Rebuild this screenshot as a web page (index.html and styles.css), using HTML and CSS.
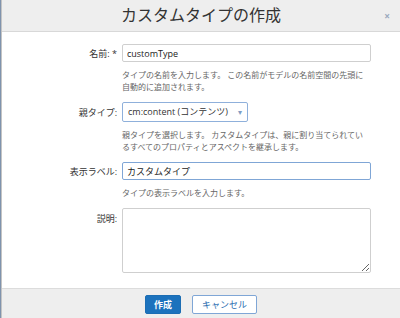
FILE: index.html
```html
<!DOCTYPE html>
<html lang="ja">
<head>
  <meta charset="UTF-8">
  <title>カスタムタイプの作成</title>
  <link rel="stylesheet" href="styles.css">
</head>
<body>
  <div class="dialog">
    <div class="dialog-header">
      <h1>カスタムタイプの作成</h1>
      <span class="close">×</span>
    </div>

    <div class="dialog-body">
      <div class="campo">
        <div class="fila">
          <label for="nombre">名前: *</label>
          <input type="text" id="nombre" class="entrada" value="customType">
        </div>
        <div class="ayuda">タイプの名前を入力します。 この名前がモデルの名前空間の先頭に<br>自動的に追加されます。</div>
      </div>

      <div class="campo">
        <div class="fila">
          <label>親タイプ:</label>
          <div class="selector">cm:content (コンテンツ)<span class="flecha">▾</span></div>
        </div>
        <div class="ayuda">親タイプを選択します。 カスタムタイプは、親に割り当てられてい<br>るすべてのプロパティとアスペクトを継承します。</div>
      </div>

      <div class="campo">
        <div class="fila">
          <label for="etiqueta">表示ラベル:</label>
          <input type="text" id="etiqueta" class="entrada activa" value="カスタムタイプ">
        </div>
        <div class="ayuda">タイプの表示ラベルを入力します。</div>
      </div>

      <div class="fila arriba">
        <label for="descripcion">説明:</label>
        <textarea id="descripcion"></textarea>
      </div>
    </div>

    <div class="dialog-footer">
      <button class="btn primario">作成</button>
      <button class="btn">キャンセル</button>
    </div>
  </div>
</body>
</html>
```

FILE: styles.css
```css
body {
  margin: 0;
  background-color: #7f93ad;
  font-family: "Open Sans", "Noto Sans CJK JP", sans-serif;
  color: #333;
}

.dialog {
  margin-left: 1px;
  border-left: 1px solid #c4c4c4;
  background-color: white;
  height: 318px;
  overflow: hidden;
}

.dialog-header {
  position: relative;
  height: 31px;
  background-color: #eeeeee;
  border-bottom: 1px solid #d8d8d8;
  text-align: center;
}

.dialog-header h1 {
  margin: 0;
  font-size: 16px;
  font-weight: normal;
  line-height: 31px;
  color: #333;
}

.close {
  position: absolute;
  right: 10px;
  top: 9px;
  font-size: 10px;
  font-weight: bold;
  color: #9aa9bd;
}

.dialog-body {
  padding: 12px 0 15px 0;
}

.campo {
  margin-bottom: 9px;
}

.fila {
  display: flex;
  align-items: center;
}

.fila.arriba {
  align-items: flex-start;
}

.fila.arriba label {
  margin-top: 4px;
}

label {
  width: 120px;
  padding-right: 5px;
  box-sizing: border-box;
  text-align: right;
  font-size: 9px;
  color: #333;
  flex-shrink: 0;
}

.entrada {
  width: 249px;
  height: 18px;
  box-sizing: border-box;
  padding: 0 4px;
  border: 1px solid #cfcfcf;
  border-radius: 2px;
  font-family: "Open Sans", "Noto Sans CJK JP", sans-serif;
  font-size: 9px;
  color: #222;
  outline: none;
}

.entrada.activa {
  border-color: #7fa6d6;
}

.selector {
  width: 126px;
  height: 20px;
  box-sizing: border-box;
  padding: 0 5px;
  border: 1px solid #8fb0db;
  border-radius: 2px;
  font-size: 9px;
  line-height: 18px;
  white-space: nowrap;
  display: flex;
  justify-content: space-between;
  flex-shrink: 0;
}

.flecha {
  color: #7f9cc4;
  font-size: 8px;
}

.ayuda {
  margin: 7px 0 0 120px;
  font-size: 8px;
  line-height: 12px;
  color: #666;
  white-space: nowrap;
}

textarea {
  width: 249px;
  height: 65px;
  box-sizing: border-box;
  border: 1px solid #cfcfcf;
  border-radius: 2px;
  font-family: "Open Sans", "Noto Sans CJK JP", sans-serif;
  margin: 0;
}

.dialog-footer {
  border-top: 1px solid #dcdcdc;
  background-color: #eeeeee;
  padding-top: 6px;
  height: 40px;
  display: flex;
  justify-content: center;
  align-items: flex-start;
  gap: 11px;
}

.btn {
  height: 19px;
  padding: 0 9px;
  margin: 0;
  background-color: white;
  border: 1px solid #7fa6d6;
  border-radius: 2px;
  color: #2a6db0;
  font-family: "Open Sans", "Noto Sans CJK JP", sans-serif;
  font-size: 9px;
  cursor: pointer;
}

.btn.primario {
  background-color: #1c72bd;
  border-color: #1c6db3;
  color: white;
  font-weight: bold;
  padding: 0 8px;
}
```
